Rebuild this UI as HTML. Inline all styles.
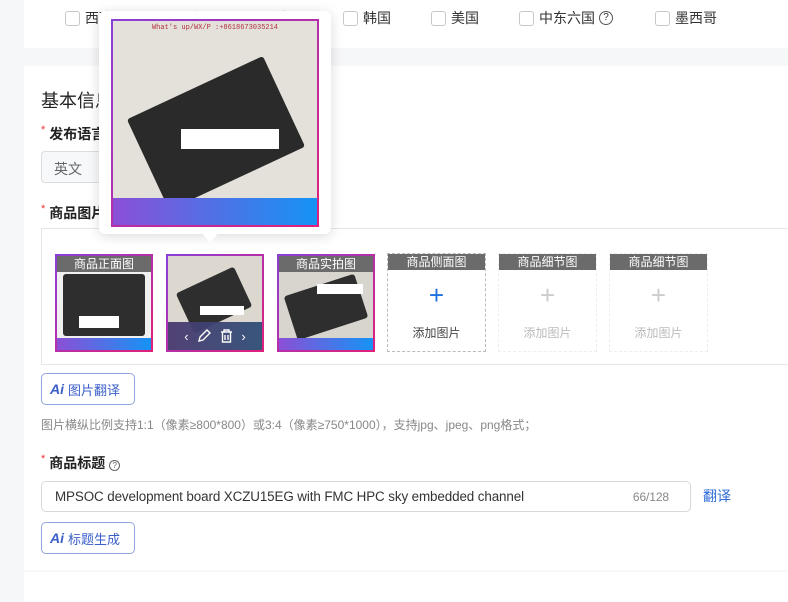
<!DOCTYPE html>
<html><head><meta charset="utf-8">
<style>
*{margin:0;padding:0;box-sizing:border-box}
body{width:788px;height:597px;overflow:hidden;background:#f6f7f9;font-family:"Liberation Sans","Noto Sans CJK SC",sans-serif;color:#333;position:relative}
.card{position:absolute;left:24px;right:0;background:#fff}
.abs{position:absolute}
.cb{position:absolute;top:8px;font-size:14px;color:#333;display:flex;align-items:center}
.cb i{display:inline-block;width:15px;height:15px;border:1px solid #c8c8c8;border-radius:3px;margin-right:5px}
.lbl{position:absolute;font-size:14px;font-weight:bold;color:#222}
.lbl b{color:#e33;font-weight:normal;font-size:11px;margin-right:4px;vertical-align:top}
.thumb{position:absolute;top:254px;width:98px;height:98px;border:2px solid;border-image:linear-gradient(135deg,#8a3fd6,#e0207a) 1;background:#e2dfda;overflow:hidden}
.thumb .tag,.box .tag{position:absolute;left:0;right:0;top:0;height:16px;background:#6b6b6b;color:#fff;font-size:12px;text-align:center;line-height:16px}
.thumb .bot{position:absolute;left:0;right:0;bottom:0;height:12px;background:linear-gradient(90deg,#8b4fd6,#1593f5)}
.board{position:absolute;background:#2e2e2e;border-radius:3px}
.box{position:absolute;top:253px;width:99px;height:99px;border:1px dashed #ccc;text-align:center}
.box .plus{position:absolute;top:28px;left:0;right:0;font-size:26px;line-height:26px}
.box .t{position:absolute;top:70px;left:0;right:0;font-size:12px}
.aibtn{position:absolute;height:32px;border:1px solid #8fa6e0;border-radius:5px;color:#3a5fc8;font-size:13px;display:flex;align-items:center;padding:0 8px}
.aibtn span{font-weight:bold;font-style:italic;margin-right:4px;font-size:14px}
</style></head><body>
<div class="card" style="top:0;height:48px"></div>
<div class="cb" style="left:65px"><i></i>西班牙</div>
<div class="cb" style="left:168px"><i></i>法国</div>
<div class="cb" style="left:255px"><i></i>德国</div>
<div class="cb" style="left:343px"><i></i>韩国</div>
<div class="cb" style="left:431px"><i></i>美国</div>
<div class="cb" style="left:519px"><i></i>中东六国 <span style="display:inline-block;width:14px;height:14px;border:1px solid #555;border-radius:50%;font-size:10px;text-align:center;line-height:12px;margin-left:4px">?</span></div>
<div class="cb" style="left:655px"><i></i>墨西哥</div>

<div class="card" style="top:66px;height:504px"></div>
<div class="card" style="top:572px;height:30px"></div>

<div class="abs" style="left:41px;top:87px;font-size:18px;color:#222">基本信息</div>
<div class="lbl" style="left:41px;top:124px"><b>*</b>发布语言</div>
<div class="abs" style="left:41px;top:151px;width:200px;height:32px;border:1px solid #ddd;border-radius:4px;background:#f7f8fa;font-size:14px;color:#666;padding:7px 12px">英文</div>
<div class="lbl" style="left:41px;top:203px"><b>*</b>商品图片</div>

<div class="abs" style="left:41px;top:228px;width:760px;height:137px;border:1px solid #e6e6e6"></div>

<div class="thumb" style="left:55px;background:#f0f0f0"><div class="board" style="left:6px;top:18px;width:82px;height:62px"></div><div class="abs" style="left:22px;top:60px;width:40px;height:12px;background:#fff"></div><div class="tag">商品正面图</div><div class="bot"></div></div>
<div class="thumb" style="left:166px;background:#dcd8d0"><div class="board" style="left:14px;top:22px;width:64px;height:44px;transform:rotate(-25deg)"></div><div class="abs" style="left:32px;top:50px;width:44px;height:9px;background:#fff"></div>
<div class="abs" style="left:0;right:0;bottom:0;height:28px;background:linear-gradient(90deg,#4b3a70,#2f4f78);opacity:.95;color:#fff;font-size:13px;display:flex;justify-content:space-around;align-items:center;padding:0 12px">‹
<svg width="14" height="14" viewBox="0 0 14 14" fill="none" stroke="#fff" stroke-width="1.4"><path d="M2 12l1-4 7-7 3 3-7 7z"/></svg>
<svg width="13" height="14" viewBox="0 0 13 14" fill="none" stroke="#fff" stroke-width="1.4"><path d="M1 3h11M4 3V1h5v2M2.5 3v10h8V3M5 6v5M8 6v5"/></svg>›</div></div>
<div class="thumb" style="left:277px;background:#d8d4ce"><div class="board" style="left:10px;top:28px;width:74px;height:46px;transform:rotate(-18deg)"></div><div class="abs" style="left:38px;top:28px;width:46px;height:10px;background:#fff"></div><div class="tag">商品实拍图</div><div class="bot"></div></div>

<div class="box" style="left:387px;border-color:#bbb"><div class="tag">商品侧面图</div><div class="plus" style="color:#1f6fe0">+</div><div class="t" style="color:#444">添加图片</div></div>
<div class="box" style="left:498px;border-color:#eee"><div class="tag">商品细节图</div><div class="plus" style="color:#ccc">+</div><div class="t" style="color:#bbb">添加图片</div></div>
<div class="box" style="left:609px;border-color:#eee"><div class="tag">商品细节图</div><div class="plus" style="color:#ccc">+</div><div class="t" style="color:#bbb">添加图片</div></div>

<div class="aibtn" style="left:41px;top:373px;width:94px"><span>Ai</span>图片翻译</div>
<div class="abs" style="left:41px;top:416px;font-size:12px;color:#888">图片横纵比例支持1:1（像素≥800*800）或3:4（像素≥750*1000），支持jpg、jpeg、png格式；</div>

<div class="lbl" style="left:41px;top:453px"><b>*</b>商品标题 <span style="display:inline-block;width:11px;height:11px;border:1px solid #666;border-radius:50%;font-size:8px;text-align:center;line-height:9px;font-weight:normal;color:#666">?</span></div>
<div class="abs" style="left:41px;top:481px;width:650px;height:31px;border:1px solid #d8d8d8;border-radius:5px;font-size:13.4px;color:#333;padding:7px 13px;letter-spacing:-0.1px">MPSOC development board XCZU15EG with FMC HPC sky embedded channel<span style="position:absolute;right:21px;top:8px;font-size:12px;color:#888">66/128</span></div>
<div class="abs" style="left:703px;top:486px;font-size:14px;color:#2d6bd6">翻译</div>
<div class="aibtn" style="left:41px;top:522px;width:94px"><span>Ai</span>标题生成</div>

<!-- popover -->
<div class="abs" style="left:99px;top:11px;width:232px;height:223px;background:#fff;border-radius:6px;box-shadow:0 2px 12px rgba(0,0,0,.15)"></div>
<div class="abs" style="left:205px;top:230px;width:10px;height:10px;background:#fff;transform:rotate(45deg)"></div>
<div class="abs" style="left:111px;top:19px;width:208px;height:208px;border:2px solid;border-image:linear-gradient(135deg,#8a3fd6,#e0207a) 1;background:#e4e1da;overflow:hidden">
<div class="abs" style="left:0;right:0;top:3px;text-align:center;font-size:7px;color:#b03040;font-family:'Liberation Mono',monospace">What's up/WX/P :+8618673035214</div>
<div class="board" style="left:28px;top:62px;width:150px;height:100px;transform:rotate(-25deg);background:#2a2a2a"></div>
<div class="abs" style="left:68px;top:108px;width:98px;height:20px;background:#fff"></div>
<div class="abs" style="left:0;right:0;bottom:0;height:27px;background:linear-gradient(90deg,#8b4fd6,#1593f5)"></div>
</div>
</body></html>
